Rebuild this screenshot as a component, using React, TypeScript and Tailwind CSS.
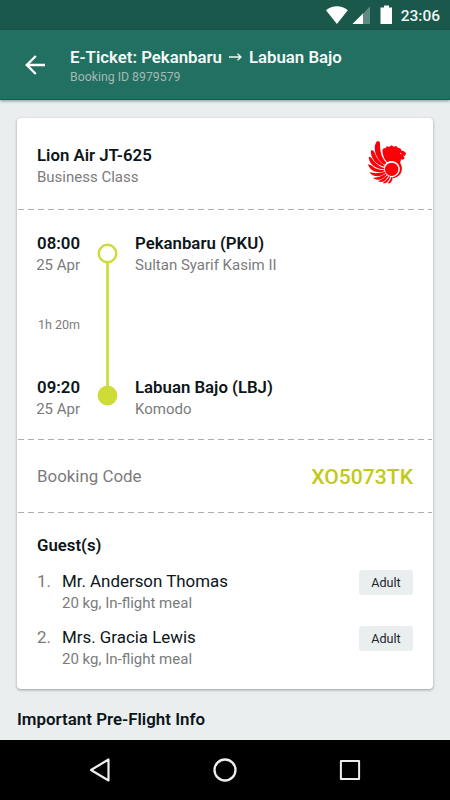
import type { ReactNode } from 'react';

const guests = [
  { name: 'Mr. Anderson Thomas', extras: '20 kg, In-flight meal', type: 'Adult' },
  { name: 'Mrs. Gracia Lewis', extras: '20 kg, In-flight meal', type: 'Adult' },
];

function StatusBar() {
  return (
    <div className="flex h-[30px] shrink-0 items-center justify-end bg-[#1b584c] pr-[10px]">
      <svg width="66" height="20" viewBox="0 0 66 20" className="mr-[9px]">
        <path d="M0 5.2C6.2-.2 15.6-.2 21.8 5.2L10.9 19Z" fill="#fff" />
        <path d="M26.500 19L44 1.500V19Z" fill="#fff" fillOpacity=".3" />
        <path d="M26.500 19L37 8.500V19Z" fill="#fff" />
        <path d="M58 .5h5v2h3V19H54.500V2.500H58Z" fill="#fff" />
      </svg>
      <span className="pt-[3px] text-[15.500px] font-medium leading-none text-[#eef5f3]">23:06</span>
    </div>
  );
}

function AppBar() {
  return (
    <header className="z-10 flex h-[70px] shrink-0 items-center border-b border-[#12604f] bg-[#217061] pl-[25px] shadow-[0_1px_3px_rgba(0,0,0,0.4)]">
      <svg width="21" height="20" viewBox="0 0 21 20" fill="none" stroke="#fff" strokeWidth="2.400">
        <path d="M20 10H2M10.800 1L1.800 10L10.800 19" />
      </svg>
      <div className="ml-6 pt-[5px]">
        <h1 className="flex items-center text-[16.800px] font-semibold leading-5 text-[#f3f8f6]">
          <span>E-Ticket: Pekanbaru</span>
          <svg width="13" height="8" viewBox="0 0 13 8" fill="none" stroke="#f3f8f6" strokeWidth="1.300" className="mx-[7px]">
            <path d="M0 4H12M8.500 .8L12 4L8.500 7.200" />
          </svg>
          <span>Labuan Bajo</span>
        </h1>
        <p className="text-[12.300px] leading-5 text-[#a5b9b4]">Booking ID 8979579</p>
      </div>
    </header>
  );
}

function AirlineLogo() {
  return (
    <svg width="38" height="43" viewBox="0 0 114 129" fill="#fb0007">
      <path d="M27 1C36-1 36 3 36 9C36 33 40 49 55 65L50 71C25 57 11 20 27 1Z" />
      <path d="M9 28C16 26 18 31 21 38C27 53 36 64 49 73L49 77C24 73 6 50 9 28Z" />
      <path d="M2 48C9 46 12 53 17 60C26 70 36 78 49 81L49 85C24 85 3 69 2 48Z" />
      <path d="M0 70C8 70 14 77 22 82C31 86 40 88 49 88L50 91C32 98 6 93 0 70Z" />
      <path d="M4 93C15 96 21 97 28 96C37 95 44 94 51 93L53 96C40 107 16 111 4 93Z" />
      <path d="M15 110C28 110 41 105 54 98L56 101C46 115 29 122 15 110Z" />
      <path d="M30 121C41 117 50 110 58 103L61 105C54 118 45 127 30 121Z" />
      <path d="M44 126C54 120 60 113 64 106L67 107C63 119 56 129 44 126Z" />
      <path d="M59 127C64 121 68 115 70 108L74 108C74 119 68 129 59 127Z" />
      <path d="M44 34L43 27L48 21L52 22L57 15L62 18L71 13L77 17L84 15L91 21L97 22L101 29L108 31L114 37L111 45L105 43L110 51L105 56L99 55L98 61L96 65C103 74 104 89 97 99C91 107 83 111 75 111L75 108C85 106 93 99 95 90C98 75 89 64 76 61C69 59 63 60 58 64C49 55 45 46 44 34Z" />
      <circle cx="71" cy="85" r="20" />
      <path d="M96 35L101 37L97 40Z" fill="#fff" />
    </svg>
  );
}

function Divider() {
  return (
    <div className="mx-px h-px bg-[repeating-linear-gradient(90deg,#afafaf_0_6px,transparent_6px_10px)]" />
  );
}

function Stop({ time, date, city, airport }: { time: string; date: string; city: string; airport: string }) {
  return (
    <div className="flex whitespace-nowrap">
      <div className="flex w-[43px] flex-col items-end">
        <div className="text-[16.800px] font-semibold leading-[22px] text-[#0c161a]">{time}</div>
        <div className="text-[15px] leading-[22px]">{date}</div>
      </div>
      <div className="ml-[55px]">
        <div className="text-[16.800px] font-semibold leading-[22px] text-[#0c161a]">{city}</div>
        <div className="text-[15px] leading-[22px]">{airport}</div>
      </div>
    </div>
  );
}

function Route() {
  return (
    <section className="relative h-[229px] px-5 pt-[22px]">
      <Stop time="08:00" date="25 Apr" city="Pekanbaru (PKU)" airport="Sultan Syarif Kasim II" />
      <div className="flex h-[100px] w-[43px] items-center justify-end text-[12.500px] whitespace-nowrap">
        <span className="-mt-px">1h 20m</span>
      </div>
      <Stop time="09:20" date="25 Apr" city="Labuan Bajo (LBJ)" airport="Komodo" />
      <svg className="absolute top-[33px] left-[80px]" width="21" height="163" viewBox="0 0 21 163">
        <path d="M10.500 19V145" stroke="#cddc39" strokeWidth="2.700" />
        <circle cx="10.500" cy="10.500" r="8.700" fill="#fff" stroke="#cddc39" strokeWidth="2.400" />
        <circle cx="10.500" cy="152.500" r="9.900" fill="#cddc39" />
      </svg>
    </section>
  );
}

function Badge({ children }: { children: ReactNode }) {
  return (
    <span className="flex h-[25px] w-[54px] items-center justify-center rounded-[3px] bg-[#eaeeef] pt-0.5 text-[12.600px] text-[#1c272b]">
      {children}
    </span>
  );
}

function TicketCard() {
  return (
    <div className="mx-[17px] mt-[18px] h-[571px] rounded bg-white text-[#7b7b7b] shadow-[0_1px_3px_rgba(0,0,0,0.35)]">
      <section className="flex h-[91px] justify-between px-5">
        <div className="pt-[26px]">
          <h2 className="text-[16.800px] font-semibold leading-[22px] text-[#0c161a]">Lion Air JT-625</h2>
          <p className="text-[15px] leading-[22px]">Business Class</p>
        </div>
        <div className="pt-[23px] pr-[7px]">
          <AirlineLogo />
        </div>
      </section>
      <Divider />
      <Route />
      <Divider />
      <section className="flex h-[72px] items-center justify-between px-5">
        <span className="pt-px text-[16.900px]">Booking Code</span>
        <span className="pt-px text-[21.100px] font-medium text-[#bfca1a]">XO5073TK</span>
      </section>
      <Divider />
      <section className="px-5 pt-[21px]">
        <h3 className="text-[16.800px] font-semibold leading-[22px] text-[#0c161a]">Guest(s)</h3>
        <ol className="mt-[14px] space-y-3">
          {guests.map((g, i) => (
            <li key={g.name} className="flex h-11">
              <span className="w-[25px] text-[16.900px] leading-[22px]">{i + 1}.</span>
              <div className="flex-1">
                <div className="text-[16.900px] leading-[22px] text-[#0c161a]">{g.name}</div>
                <div className="text-[15px] leading-[22px]">{g.extras}</div>
              </div>
              <Badge>{g.type}</Badge>
            </li>
          ))}
        </ol>
      </section>
    </div>
  );
}

function NavBar() {
  return (
    <nav className="flex h-[60px] shrink-0 items-center justify-between bg-black pr-[89px] pl-[88px]">
      <svg width="24" height="26" viewBox="0 0 24 26" fill="none" stroke="#eee" strokeWidth="2.200" strokeLinejoin="round">
        <path d="M20.500 2.500V23.500L3 13Z" />
      </svg>
      <svg width="26" height="26" viewBox="0 0 26 26" fill="none" stroke="#eee" strokeWidth="2.300" className="-ml-[2px]">
        <circle cx="13" cy="13" r="10.500" />
      </svg>
      <svg width="22" height="22" viewBox="0 0 22 22" fill="none" stroke="#eee" strokeWidth="2" strokeLinejoin="round">
        <rect x="1.900" y="1.900" width="18.200" height="18.200" />
      </svg>
    </nav>
  );
}

export default function App() {
  return (
    <div className="flex h-[800px] w-[450px] flex-col overflow-hidden bg-[#eaeeef] font-['Roboto',sans-serif]">
      <StatusBar />
      <AppBar />
      <main className="flex-1 overflow-hidden">
        <TicketCard />
        <h2 className="mt-[19px] ml-[17px] text-[16.900px] font-semibold leading-[22px] text-[#0c161a]">
          Important Pre-Flight Info
        </h2>
      </main>
      <NavBar />
    </div>
  );
}
